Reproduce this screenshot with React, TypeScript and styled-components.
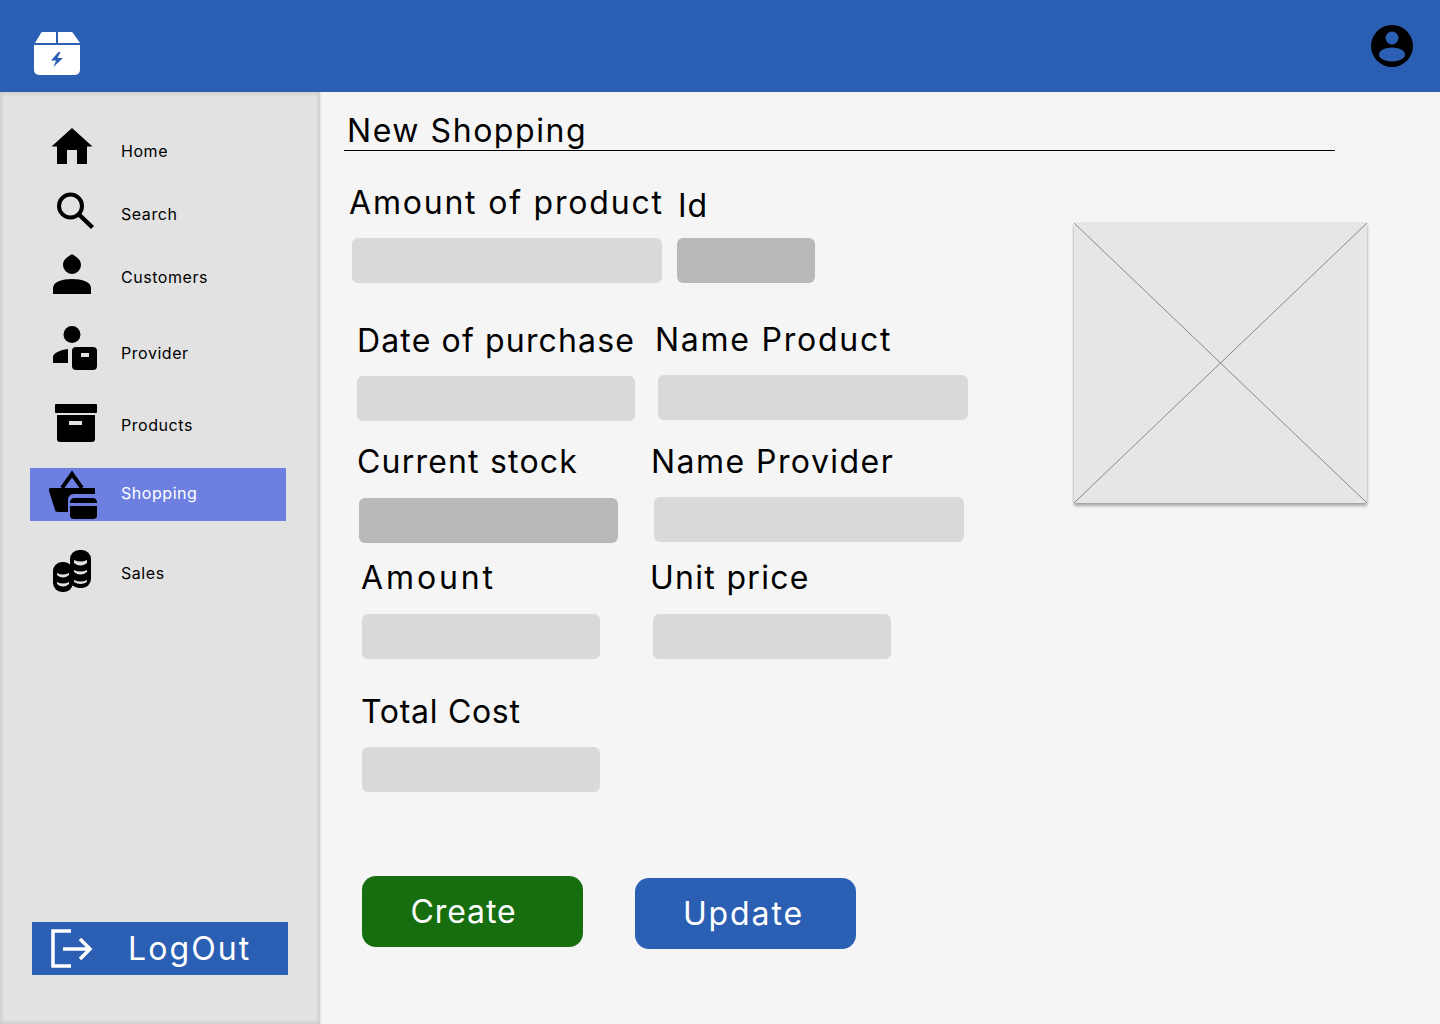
import type { ReactNode } from "react";
import styled, { createGlobalStyle } from "styled-components";

const blue = "#2b5fb3";

const GlobalStyle = createGlobalStyle`
  html, body {
    margin: 0;
    padding: 0;
    height: 1024px;
    overflow: hidden;
    background: #f5f5f5;
    font-family: Inter, "Liberation Sans", sans-serif;
  }
  * { box-sizing: border-box; }
`;

const Page = styled.div`
  width: 1440px;
  height: 1024px;
  display: flex;
  flex-direction: column;
`;

const Header = styled.header`
  height: 92px;
  background: ${blue};
  display: flex;
  align-items: flex-start;
  justify-content: space-between;
  padding: 25px 27px 0 34px;
  flex: none;
`;

const Logo = styled.div`
  margin-top: 7px;
`;

const Body = styled.div`
  flex: 1;
  display: flex;
  min-height: 0;
`;

const Sidebar = styled.aside`
  width: 320px;
  flex: none;
  background: #e2e2e2;
  box-shadow: inset 0 0 3px 2px rgba(0, 0, 0, 0.09), 1px 0 1px rgba(0, 0, 0, 0.05);
  display: flex;
  flex-direction: column;
  padding: 32px 0 49px 30px;
`;

const NavRow = styled.div<{ $top: number; $active?: boolean }>`
  width: 256px;
  height: 53px;
  margin-top: ${(p) => p.$top}px;
  display: flex;
  align-items: center;
  gap: 23px;
  padding-left: 16px;
  background: ${(p) => (p.$active ? "#6d80e2" : "transparent")};
  color: ${(p) => (p.$active ? "#fff" : "#000")};
  font-size: 16px;
  letter-spacing: 0.55px;
`;

const NavLabel = styled.span<{ $raised?: boolean }>`
  padding-bottom: ${(p) => (p.$raised ? 3 : 0)}px;
`;

const NavIcon = styled.svg`
  width: 52px;
  height: 52px;
  flex: none;
  overflow: visible;
`;

const LogoutButton = styled.button`
  width: 256px;
  height: 53px;
  margin-top: auto;
  margin-left: 2px;
  border: 0;
  padding: 0 0 0 18px;
  background: ${blue};
  color: #fff;
  display: flex;
  align-items: center;
  gap: 34px;
  font: inherit;
  font-size: 32px;
  letter-spacing: 2.1px;
`;

const Main = styled.main`
  flex: 1;
  padding: 18px 0 0 24px;
`;

const Title = styled.h1`
  width: 991px;
  height: 41px;
  margin: 0;
  padding-left: 3px;
  border-bottom: 1px solid #000;
  color: #000;
  font-size: 32px;
  line-height: 42px;
  font-weight: 400;
  letter-spacing: 1.55px;
`;

const Content = styled.div`
  display: flex;
  align-items: flex-start;
`;

const Form = styled.form`
  width: 730px;
  flex: none;
  padding-top: 32px;
`;

const Row = styled.div<{ $top?: number }>`
  display: flex;
  align-items: flex-start;
  margin-top: ${(p) => p.$top ?? 0}px;
`;

const Field = styled.div<{ $left: number; $down?: number; $width: number }>`
  width: ${(p) => p.$width}px;
  margin-left: ${(p) => p.$left}px;
  margin-top: ${(p) => p.$down ?? 0}px;
  flex: none;
`;

const Label = styled.label<{ $shift?: number; $gap?: number; $spacing: number }>`
  display: block;
  height: 40px;
  margin-left: ${(p) => p.$shift ?? 0}px;
  margin-bottom: ${(p) => p.$gap ?? 15}px;
  color: #000;
  font-size: 32px;
  line-height: 40px;
  letter-spacing: ${(p) => p.$spacing}px;
  white-space: nowrap;
`;

const Input = styled.div<{ $readOnly?: boolean }>`
  height: 45px;
  border-radius: 6px;
  background: ${(p) => (p.$readOnly ? "#b9b9b9" : "#d9d9d9")};
`;

const Actions = styled.div`
  display: flex;
  align-items: flex-start;
  gap: 52px;
  margin: 84px 0 0 18px;
`;

const ActionButton = styled.button<{ $color: string; $down?: number; $inset: number; $spacing: number }>`
  width: 221px;
  height: 71px;
  margin-top: ${(p) => p.$down ?? 0}px;
  padding: 0 ${(p) => p.$inset}px 0 0;
  border: 0;
  border-radius: 14px;
  background: ${(p) => p.$color};
  color: #fff;
  font: inherit;
  font-size: 32px;
  letter-spacing: ${(p) => p.$spacing}px;
`;

const ImagePlaceholder = styled.svg`
  display: block;
  width: 293px;
  height: 280px;
  margin-top: 72px;
  flex: none;
  overflow: visible;
  background: #e6e6e6;
  box-shadow: 0 3px 3px rgba(0, 0, 0, 0.3), 0 0 2px rgba(0, 0, 0, 0.12);
`;

const HomeIcon = () => (
  <NavIcon viewBox="46 125 52 52">
    <path d="M51.500 146.500 72 128 92.500 146.500H87V164H77V150H67V164H57V146.500Z" />
  </NavIcon>
);

const SearchIcon = () => (
  <NavIcon viewBox="46 188 52 52">
    <circle cx="70.500" cy="206" r="11.500" fill="none" stroke="#000" strokeWidth="4" />
    <path d="M79 214.500 92.500 227.500" stroke="#000" strokeWidth="4.500" fill="none" />
  </NavIcon>
);

const CustomersIcon = () => (
  <NavIcon viewBox="46 251 52 52">
    <path d="M72 254C74 256 81 258 81 265A9 9 0 0 1 63 265C63 258 70 256 72 254Z" />
    <path d="M53 294V288C53 282 62 279 72 279S91 282 91 288V294Z" />
  </NavIcon>
);

const ProviderIcon = () => (
  <NavIcon viewBox="46 327 52 52">
    <circle cx="72" cy="334.500" r="8.500" />
    <path d="M53 363V357C53 353 60 350 68 349V363Z" />
    <rect x="72" y="347" width="25" height="23" rx="4" />
    <rect x="81" y="353" width="8" height="4" fill="#e2e2e2" />
  </NavIcon>
);

const ProductsIcon = () => (
  <NavIcon viewBox="46 399 52 52">
    <rect x="55" y="404" width="42" height="9" rx="1" />
    <path d="M57 415H95V439A3 3 0 0 1 92 442H60A3 3 0 0 1 57 439Z" />
    <rect x="69" y="421" width="13" height="4" fill="#e2e2e2" />
  </NavIcon>
);

const ShoppingIcon = () => (
  <NavIcon viewBox="46 468 52 52">
    <path d="M62 487 72 473 82 487" fill="none" stroke="#000" strokeWidth="4" />
    <path d="M50 487H95V493H74C70 493 68 496 68 499V511H58C56 511 55 510 55 509L49 490C49 488 49 487 50 487Z" />
    <path d="M70 502V501C70 499 72 497 74 497H93C95 497 97 499 97 501V502Z" />
    <path d="M70 505H97V515C97 517 95 518 93 518H74C72 518 70 517 70 515Z" />
  </NavIcon>
);

const SalesIcon = () => (
  <NavIcon viewBox="46 547 52 52">
    <rect x="70" y="550" width="21" height="38" rx="9" />
    <path
      d="M74 560Q80.500 563 87 560V563Q80.500 568 74 563ZM74 570Q80.500 573 87 570V572Q80.500 577 74 572ZM74 580Q80.500 583 87 580V582Q80.500 586 74 582Z"
      fill="#e2e2e2"
    />
    <rect x="53" y="562" width="20" height="30" rx="9" />
    <path d="M57 573Q63 576 69 573V575Q63 580 57 575ZM57 582Q63 585 69 582V584Q63 589 57 584Z" fill="#e2e2e2" />
  </NavIcon>
);

const LogoutIcon = () => (
  <svg width="44" height="40" viewBox="50 927 44 40" fill="none" stroke="#fff" strokeWidth="3.500">
    <path d="M71 929H53V964H71" />
    <path d="M63 947H90M80 937 90 947 80 957" />
  </svg>
);

const LogoIcon = () => (
  <svg width="46" height="43" viewBox="34 32 46 43">
    <path d="M35 43 41 33C41.500 32.300 42 32 43 32H56V43Z" fill="#fff" />
    <path d="M58 32H71C72 32 72.500 32.300 73 33L80 43H58Z" fill="#fff" />
    <path d="M34 45H80V70A5 5 0 0 1 75 75H39A5 5 0 0 1 34 70Z" fill="#fff" />
    <path d="M58.500 52 51 60.500H56L53.500 67 63 58H57.500L60.500 52Z" fill={blue} />
  </svg>
);

const AccountIcon = () => (
  <svg width="42" height="42" viewBox="1371 25 42 42">
    <circle cx="1392" cy="46" r="21" />
    <circle cx="1392" cy="38" r="6.500" fill={blue} />
    <ellipse cx="1392" cy="54.500" rx="13" ry="7" fill={blue} />
  </svg>
);

type NavItem = { label: string; top: number; icon: ReactNode; active?: boolean };

const navItems: NavItem[] = [
  { label: "Home", top: 0, icon: <HomeIcon /> },
  { label: "Search", top: 10, icon: <SearchIcon /> },
  { label: "Customers", top: 10, icon: <CustomersIcon /> },
  { label: "Provider", top: 23, icon: <ProviderIcon /> },
  { label: "Products", top: 19, icon: <ProductsIcon /> },
  { label: "Shopping", top: 17, icon: <ShoppingIcon />, active: true },
  { label: "Sales", top: 25, icon: <SalesIcon /> },
];

export default function App() {
  return (
    <Page>
      <GlobalStyle />
      <Header>
        <Logo>
          <LogoIcon />
        </Logo>
        <AccountIcon />
      </Header>
      <Body>
        <Sidebar>
          {navItems.map((item) => (
            <NavRow key={item.label} $top={item.top} $active={item.active}>
              {item.icon}
              <NavLabel $raised={item.active}>{item.label}</NavLabel>
            </NavRow>
          ))}
          <LogoutButton>
            <LogoutIcon />
            LogOut
          </LogoutButton>
        </Sidebar>
        <Main>
          <Title>New Shopping</Title>
          <Content>
            <Form>
              <Row>
                <Field $left={8} $width={310}>
                  <Label $shift={-3} $spacing={1.8}>Amount of product</Label>
                  <Input />
                </Field>
                <Field $left={15} $down={3} $width={138}>
                  <Label $shift={1} $gap={12} $spacing={1}>Id</Label>
                  <Input $readOnly />
                </Field>
              </Row>
              <Row $top={37}>
                <Field $left={13} $down={1} $width={278}>
                  <Label $shift={0} $spacing={1.15}>Date of purchase</Label>
                  <Input />
                </Field>
                <Field $left={23} $width={310}>
                  <Label $shift={-3} $spacing={1.75}>Name Product</Label>
                  <Input />
                </Field>
              </Row>
              <Row $top={21}>
                <Field $left={15} $width={259}>
                  <Label $shift={-2} $gap={16} $spacing={1.2}>Current stock</Label>
                  <Input $readOnly />
                </Field>
                <Field $left={36} $width={310}>
                  <Label $shift={-3} $spacing={1.45}>Name Provider</Label>
                  <Input />
                </Field>
              </Row>
              <Row $top={15}>
                <Field $left={18} $width={238}>
                  <Label $shift={-1} $gap={16} $spacing={2.9}>Amount</Label>
                  <Input />
                </Field>
                <Field $left={53} $width={238}>
                  <Label $shift={-3} $gap={16} $spacing={1.3}>Unit price</Label>
                  <Input />
                </Field>
              </Row>
              <Row $top={33}>
                <Field $left={18} $width={238}>
                  <Label $shift={-1} $spacing={0.7}>Total Cost</Label>
                  <Input />
                </Field>
              </Row>
              <Actions>
                <ActionButton type="button" $color="#166e0e" $inset={18} $spacing={0.9}>Create</ActionButton>
                <ActionButton type="button" $color={blue} $down={2} $inset={4} $spacing={1.9}>Update</ActionButton>
              </Actions>
            </Form>
            <ImagePlaceholder viewBox="0 0 293 280">
              <path d="M0 0 293 280M293 0 0 280" stroke="#888" strokeWidth="1" fill="none" />
            </ImagePlaceholder>
          </Content>
        </Main>
      </Body>
    </Page>
  );
}
